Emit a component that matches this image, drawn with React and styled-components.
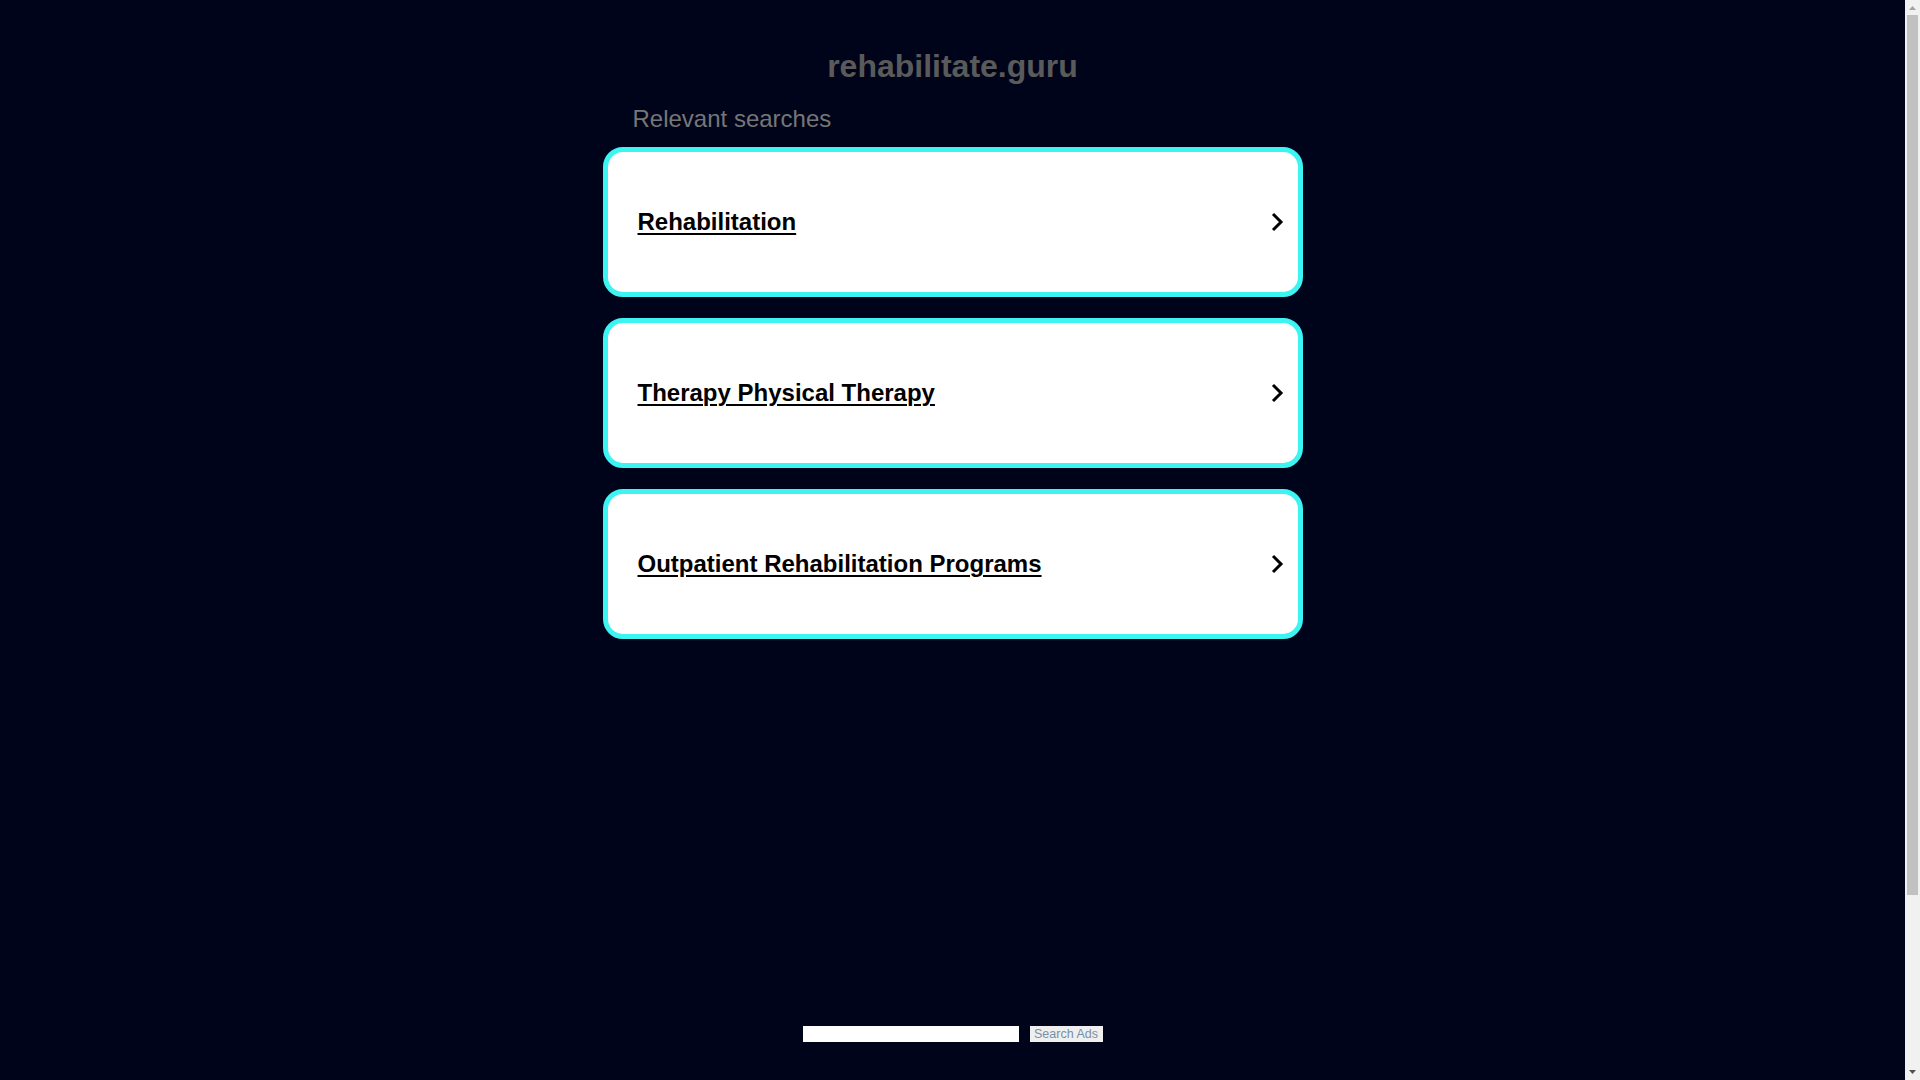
import React from "react";
import styled, { createGlobalStyle } from "styled-components";

const Global = createGlobalStyle`
  html, body {
    margin: 0;
    padding: 0;
    background: #00041b;
  }
  body {
    font-family: "Liberation Sans", Arial, sans-serif;
  }
`;

const Page = styled.div`
  display: flex;
  flex-direction: column;
  align-items: center;
  padding: 48px 15px 0 0;
  min-height: 1080px;
  box-sizing: border-box;
`;

const Title = styled.h1`
  margin: 0;
  font-size: 32px;
  font-weight: 700;
  line-height: 37px;
  color: #5a5a5a;
  text-align: center;
`;

const Main = styled.div`
  width: 700px;
  display: flex;
  flex-direction: column;
`;

const SectionLabel = styled.div`
  margin: 20px 0 14px 30px;
  font-size: 24px;
  line-height: 28px;
  color: #767676;
`;

const CardList = styled.div`
  display: flex;
  flex-direction: column;
  gap: 21px;
`;

const Card = styled.a`
  box-sizing: border-box;
  height: 150px;
  border: 5px solid #3cf5f3;
  border-radius: 20px;
  background: #ffffff;
  display: flex;
  align-items: center;
  justify-content: space-between;
  padding: 0 14px 0 30px;
  color: #000;
  text-decoration: none;
  cursor: pointer;
`;

const CardText = styled.span`
  font-size: 24px;
  font-weight: 700;
  line-height: 28px;
  text-decoration: underline;
  text-decoration-thickness: 2px;
  text-underline-offset: 3px;
`;

const Chevron = styled.svg`
  width: 14px;
  height: 22px;
  flex: none;
`;

const SearchBar = styled.form`
  margin-top: 387px;
  display: flex;
  align-items: center;
  gap: 11px;
`;

const SearchInput = styled.input`
  box-sizing: border-box;
  width: 216px;
  height: 16px;
  border: none;
  padding: 0 3px;
  margin: 0;
  background: #fff;
  font-size: 12px;
  outline: none;
`;

const SearchButton = styled.button`
  box-sizing: border-box;
  width: 73px;
  height: 16px;
  border: none;
  margin: 0;
  padding: 0;
  background: #efefef;
  color: #7890a6;
  font-family: "Liberation Sans", Arial, sans-serif;
  font-size: 12.5px;
  line-height: 16px;
`;

const ScrollTrack = styled.div`
  position: fixed;
  top: 0;
  right: 0;
  width: 15px;
  height: 100vh;
  background: #f1f1f1;
  display: flex;
  flex-direction: column;
  align-items: center;
`;

const ScrollArrow = styled.svg`
  width: 15px;
  height: 15px;
  flex: none;
`;

const ScrollThumb = styled.div`
  width: 11px;
  height: 880px;
  background: #c1c1c1;
`;

const ScrollRest = styled.div`
  flex: 1;
`;

const items = [
  "Rehabilitation",
  "Therapy Physical Therapy",
  "Outpatient Rehabilitation Programs",
];

export default function App() {
  return (
    <>
      <Global />
      <Page>
        <Title>rehabilitate.guru</Title>
        <Main>
          <SectionLabel>Relevant searches</SectionLabel>
          <CardList>
            {items.map((t) => (
              <Card key={t}>
                <CardText>{t}</CardText>
                <Chevron viewBox="0 0 14 22">
                  <polyline
                    points="3,3 11,11 3,19"
                    fill="none"
                    stroke="#000"
                    strokeWidth="3"
                    strokeLinejoin="miter"
                  />
                </Chevron>
              </Card>
            ))}
          </CardList>
        </Main>
        <SearchBar onSubmit={(e) => e.preventDefault()}>
          <SearchInput type="text" />
          <SearchButton type="submit">Search Ads</SearchButton>
        </SearchBar>
      </Page>
      <ScrollTrack aria-hidden="true">
        <ScrollArrow viewBox="0 0 15 15">
          <polygon points="4,10 11,10 7.5,6" fill="#a3a3a3" />
        </ScrollArrow>
        <ScrollThumb />
        <ScrollRest />
        <ScrollArrow viewBox="0 0 15 15">
          <polygon points="4,5 11,5 7.5,9" fill="#505050" />
        </ScrollArrow>
      </ScrollTrack>
    </>
  );
}
